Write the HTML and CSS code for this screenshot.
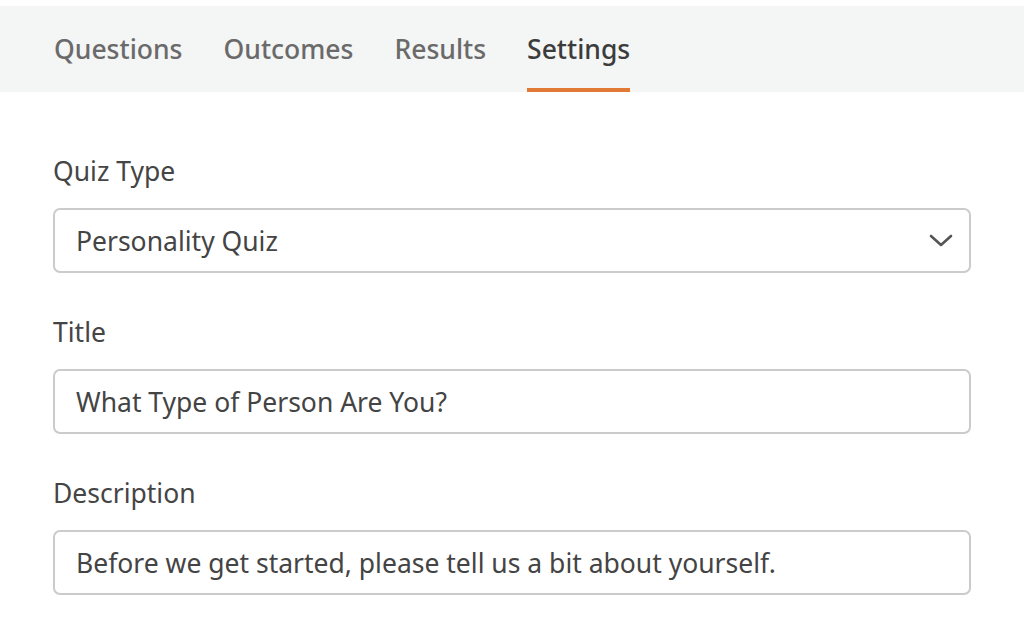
FILE: index.html
```html
<!DOCTYPE html>
<html lang="en">
<head>
    <meta charset="UTF-8">
    <meta name="viewport" content="width=device-width, initial-scale=1.0">
    <title>Quiz Settings</title>
    <link rel="stylesheet" href="styles.css">
</head>
<body>
    <nav class="tabs">
        <div class="tab">Questions</div>
        <div class="tab">Outcomes</div>
        <div class="tab">Results</div>
        <div class="tab active">Settings</div>
    </nav>
    <form class="settings">
        <div class="field">
            <label class="field-label">Quiz Type</label>
            <div class="select">
                <span>Personality Quiz</span>
                <svg class="chevron" width="24" height="14" viewBox="0 0 24 14"><path d="M2 2 L12 11 L22 2" fill="none" stroke="#555" stroke-width="2.6" stroke-linecap="round" stroke-linejoin="round"/></svg>
            </div>
        </div>
        <div class="field">
            <label class="field-label">Title</label>
            <div class="input">What Type of Person Are You?</div>
        </div>
        <div class="field">
            <label class="field-label">Description</label>
            <div class="input">Before we get started, please tell us a bit about yourself.</div>
        </div>
    </form>
</body>
</html>
```

FILE: styles.css
```css
*{margin:0;padding:0;box-sizing:border-box;font-family:'Noto Sans','Open Sans',sans-serif}
body{background:#fff;color:#444;padding-top:6px}
.tabs{display:flex;gap:41px;background:#f4f5f5;height:86px;padding:0 54px;align-items:stretch}
.tab{display:flex;align-items:center;font-size:26.5px;font-weight:500;color:#6a6a6a;border-bottom:4px solid transparent;padding-top:4px}
.tab.active{color:#3c3c3c;border-bottom-color:#e27a36}
.settings{padding:62px 53px 0;display:flex;flex-direction:column;gap:42px}
.field{display:flex;flex-direction:column;gap:20px}
.field-label{font-size:26.5px;color:#454545;line-height:34px}
.select,.input{height:65px;border:2px solid #cbcbcb;border-radius:7px;display:flex;align-items:center;padding:0 21px;font-size:26.5px;color:#444}
.select{justify-content:space-between;padding-right:16px}
```
